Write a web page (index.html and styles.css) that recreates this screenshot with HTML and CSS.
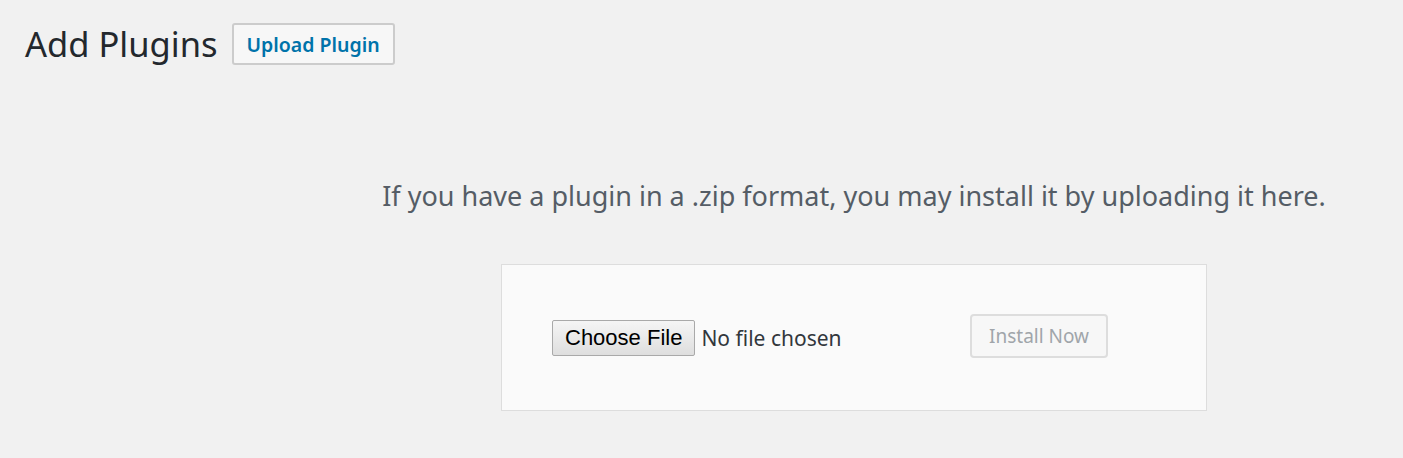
FILE: index.html
```html
<!DOCTYPE html>
<html lang="en">
<head>
  <meta charset="UTF-8">
  <meta name="viewport" content="width=device-width, initial-scale=1.0">
  <title>Add Plugins</title>
  <link rel="stylesheet" href="styles.css">
</head>

<body>
  <div class="wrap">
    <div class="page-header">
      <h1>Add Plugins</h1>
      <a href="#" class="upload-toggle">Upload Plugin</a>
    </div>

    <div class="upload-plugin">
      <p class="install-help">If you have a plugin in a .zip format, you may install it by uploading it here.</p>
      <form class="upload-form">
        <label class="file-field">
          <span class="file-button">Choose File</span>
          <span class="file-name">No file chosen</span>
        </label>
        <button type="submit" class="install-button" disabled>Install Now</button>
      </form>
    </div>
  </div>
</body>
</html>
```

FILE: styles.css
```css
body {
margin: 0;
padding: 0;
background-color: #f1f1f1;
font-family: "Noto Sans", "Open Sans", sans-serif;
color: #23282d;
}

.wrap {
padding: 23px 0 0 25px;
}

.page-header {
display: flex;
align-items: center;
gap: 14px;
}

h1 {
margin: 0;
font-size: 34.5px;
font-weight: 400;
line-height: 42px;
color: #23282d;
}

.upload-toggle {
display: inline-block;
box-sizing: border-box;
height: 42px;
padding: 0 13px;
line-height: 39px;
font-size: 19.5px;
font-weight: 600;
color: #0073aa;
text-decoration: none;
background-color: #f7f7f7;
border: 2px solid #cccccc;
border-radius: 3px;
}

.upload-plugin {
margin-left: 280px;
padding-top: 113px;
text-align: center;
}

.install-help {
margin: 0 0 51px;
font-size: 27px;
line-height: 35px;
color: #555d66;
}

.upload-form {
box-sizing: border-box;
width: 706px;
height: 147px;
margin: 0 auto;
padding: 0 0 0 50px;
display: flex;
align-items: center;
background-color: #fafafa;
border: 1px solid #dddddd;
}

.file-field {
display: flex;
align-items: center;
width: 418px;
}

.file-button {
box-sizing: border-box;
height: 36px;
padding: 0 12px;
line-height: 34px;
font-family: "Liberation Sans", Arial, sans-serif;
font-size: 22px;
color: #000;
background: linear-gradient(#f5f5f5, #dedede);
border: 1px solid #a9a9a9;
border-radius: 2px;
}

.file-name {
margin-left: 6px;
font-size: 21px;
color: #32373c;
}

.install-button {
box-sizing: border-box;
height: 44px;
margin-bottom: 3px;
padding: 0 17px;
font-family: "Noto Sans", "Open Sans", sans-serif;
font-size: 19px;
color: #a0a5aa;
background-color: #f7f7f7;
border: 2px solid #dddddd;
border-radius: 4px;
}
```
